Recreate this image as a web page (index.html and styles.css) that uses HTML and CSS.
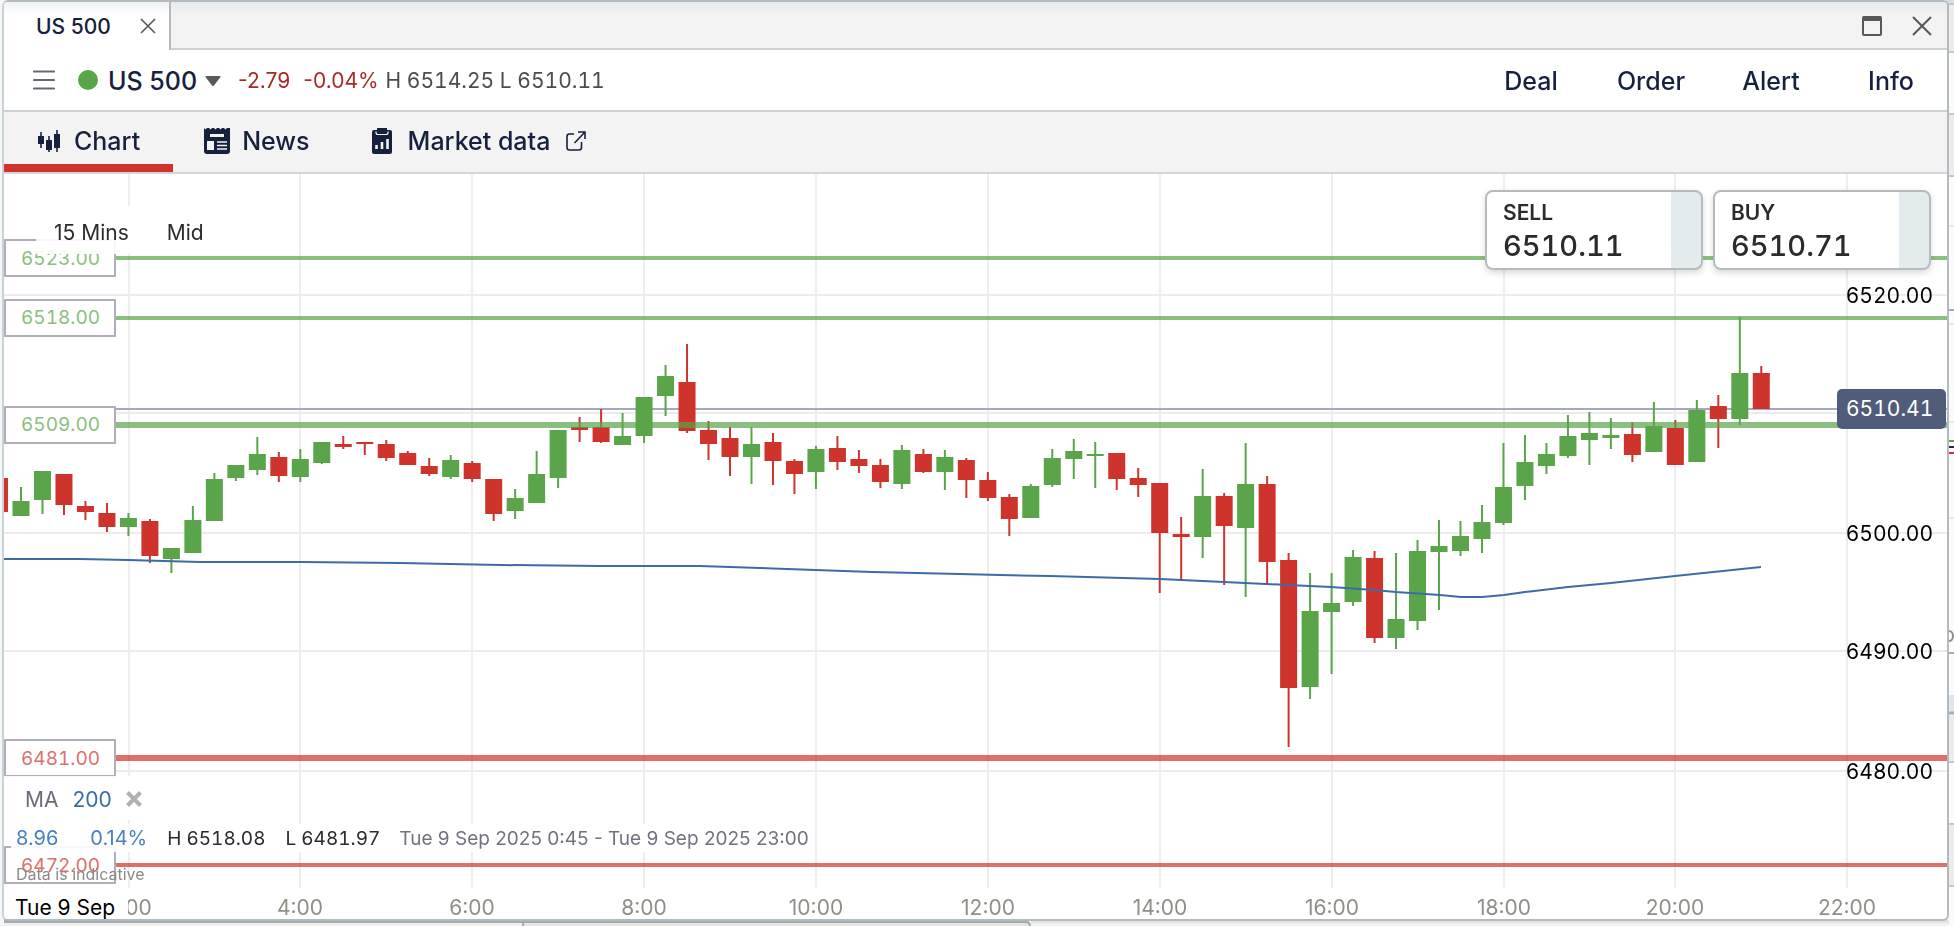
FILE: index.html
```html
<!DOCTYPE html>
<html lang="en">
<head>
<meta charset="utf-8">
<title>US 500</title>
<link rel="stylesheet" href="styles.css">
</head>
<body>
<div class="backdrop" aria-hidden="true">
  <svg class="backdrop-right" viewBox="0 0 8 926" preserveAspectRatio="none">
    <rect width="8" height="926" fill="#fbfbfb"/>
    <rect width="8" height="4" fill="#d8dfe3"/>
    <rect y="5" width="8" height="46" fill="#ececec"/>
    <rect y="114" width="8" height="61" fill="#ececec"/>
    <rect y="715" width="8" height="46" fill="#ececec"/>
    <rect y="824" width="8" height="61" fill="#ececec"/>
    <rect y="695" width="8" height="17" fill="#dde6f1"/>
    <path d="M0 4h8M0 52h8M0 114h8M0 176h8M0 762h8M0 824h8M0 886h8" stroke="#c3c9cc" stroke-width="2"/>
    <path d="M0 226h8M0 324h8M0 422h8M0 518h8" stroke="#e6e6e6" stroke-width="2"/>
    <path d="M0 310h8M0 653h8" stroke="#a3aabb" stroke-width="2"/>
    <path d="M0 441h8" stroke="#5aa44a" stroke-width="2"/>
    <path d="M0 447h8" stroke="#2c2540" stroke-width="2"/>
    <path d="M0 453h8" stroke="#ce342b" stroke-width="2"/>
    <path d="M0 713h8" stroke="#aab0b2" stroke-width="3"/>
    <ellipse cx="3" cy="636" rx="4" ry="5" fill="none" stroke="#8f8f88" stroke-width="2"/>
  </svg>
  <div class="backdrop-bottom"><span class="edge"></span><span class="panel"></span><span class="rest"></span></div>
</div>

<main class="window">
  <header class="titlebar">
    <div class="window-tab">
      <span>US 500</span>
      <button class="icon-button" aria-label="Close tab">
        <svg width="16" height="16" viewBox="0 0 16 16"><path d="M1 1l14 14M15 1L1 15" stroke="#55585a" stroke-width="1.6"/></svg>
      </button>
    </div>
    <div class="window-controls">
      <button class="icon-button" aria-label="Maximise">
        <svg width="20" height="20" viewBox="0 0 20 20"><rect x="1" y="1" width="18" height="18" rx="1" fill="none" stroke="#55585a" stroke-width="2"/><path d="M1 2.500h18" stroke="#55585a" stroke-width="5"/></svg>
      </button>
      <button class="icon-button" aria-label="Close window">
        <svg width="20" height="20" viewBox="0 0 20 20"><path d="M1 1l18 18M19 1L1 19" stroke="#55585a" stroke-width="2"/></svg>
      </button>
    </div>
  </header>

  <section class="market">
    <button class="icon-button" aria-label="Menu">
      <svg width="22" height="20" viewBox="0 0 22 20"><path d="M1 1.500h20M1 10h20M1 18.500h20" stroke="#6b6675" stroke-width="2.200" stroke-linecap="round"/></svg>
    </button>
    <span class="status-dot"></span>
    <button class="market-name">US 500
      <svg width="16" height="10" viewBox="0 0 16 10"><path d="M1 0h14q1 0 .5 1L9 9.500q-1 .8-2 0L.5 1Q0 0 1 0z" fill="#555c5e"/></svg>
    </button>
    <span class="change">-2.79</span>
    <span class="change percent">-0.04%</span>
    <span class="range">H 6514.25 L 6510.11</span>
    <nav class="actions">
      <button>Deal</button><button>Order</button><button>Alert</button><button>Info</button>
    </nav>
  </section>

  <nav class="views">
    <a class="view active" href="#chart">
      <svg width="22" height="22" viewBox="0 0 22 22" fill="#16213e"><path d="M2.200 2h1.600v4H6v8H3.800v4H2.200v-4H0V6h2.200zM10.200 6h1.600v4H14v10h-2.200v2h-1.600v-2H8V10h2.200zM18.200 0h1.600v4H22v14h-2.200v4h-1.600v-4H16V4h2.200z"/></svg>
      Chart
    </a>
    <a class="view" href="#news">
      <svg width="26" height="26" viewBox="0 0 26 26"><path d="M0 0l1.500 1.500L3 0h2l1.500 1.500L8 0h2l1.500 1.500L13 0h2l1.500 1.500L18 0h2l1.500 1.500L23 0h3v23q0 3-3 3H3q-3 0-3-3z" fill="#16213e"/><path d="M6 7.500h14" stroke="#f3f3f3" stroke-width="3"/><rect x="3" y="13" width="7" height="9" fill="#f3f3f3"/><path d="M13 14h10M13 17.500h10M13 21h10" stroke="#f3f3f3" stroke-width="1.500"/></svg>
      News
    </a>
    <a class="view data" href="#market-data">
      <svg width="20" height="26" viewBox="0 0 20 26"><path d="M5 0h10v2h3q2 0 2 2v20q0 2-2 2H2q-2 0-2-2V4q0-2 2-2h3z" fill="#16213e"/><path d="M4 3.500v1q0 2 2 2h8q2 0 2-2v-1" fill="none" stroke="#f3f3f3" stroke-width="1.200"/><path d="M4.500 17v4M10 14v7M15.500 11v10" stroke="#f3f3f3" stroke-width="2.600"/></svg>
      Market data
      <svg width="20" height="20" viewBox="0 0 20 20" fill="none" stroke="#16213e" stroke-width="1.600"><path d="M8 3H3.500Q1 3 1 5.500v11Q1 19 3.500 19H13q2.500 0 2.500-2.500V11M12 1h7v7M19 1L8.500 12"/></svg>
    </a>
  </nav>

  <section class="chart" id="chart">
    <div class="plot">
      <svg class="canvas" id="canvas" viewBox="4 174 1943 714" preserveAspectRatio="none"></svg>
      <div id="labels"></div>
      <div class="settings"><button>15 Mins</button><button>Mid</button></div>
      <div class="tickets">
        <button class="ticket"><span class="side">SELL</span><span class="price">6510.11</span></button>
        <button class="ticket"><span class="side">BUY</span><span class="price">6510.71</span></button>
      </div>
      <div class="legend">
        <div class="indicator"><span>MA</span><span class="period">200</span>
          <button class="icon-button" aria-label="Remove moving average"><svg width="16" height="16" viewBox="0 0 16 16"><path d="M1.500 1.500l13 13M14.500 1.500l-13 13" stroke="#b0b0b5" stroke-width="4"/></svg></button>
        </div>
        <div class="stats">
          <span class="gain">8.96</span><span class="gain gain-percent">0.14%</span><span class="high">H 6518.08</span><span class="low">L 6481.97</span><span class="period-range">Tue 9 Sep 2025 0:45 - Tue 9 Sep 2025 23:00</span>
        </div>
        <small class="note">Data is indicative</small>
      </div>
    </div>
    <div class="axis" id="axis"><span class="date">Tue 9 Sep</span></div>
  </section>
</main>
<script src="chart.js"></script>
</body>
</html>
```
FILE: styles.css
```css
* { box-sizing: border-box; }

body {
  margin: 0;
  height: 100vh;
  padding: 0 5px 5px 2px;
  background: #f4f6f7;
  font-family: Inter, "Liberation Sans", sans-serif;
  color: #2b2b2b;
}

button {
  padding: 0;
  border: 0;
  background: none;
  font: inherit;
  color: inherit;
}

svg { display: block; flex: none; }

.backdrop {
  position: fixed;
  inset: 0;
  z-index: -1;
}

.backdrop-right {
  position: absolute;
  right: 0;
  width: 8px;
  height: 100%;
}

.backdrop-bottom {
  position: absolute;
  inset: auto 5px 0 4px;
  height: 6px;
  display: flex;
}

.backdrop-bottom span { border-top: 3px solid #a3acae; }
.backdrop-bottom .edge { flex: 0 0 518px; background: #f0f0f0; }
.backdrop-bottom .panel {
  flex: 0 0 509px;
  background: #e6e6e6;
  border: 2px solid #a3acae;
  border-top-width: 3px;
  border-bottom: 0;
  border-top-right-radius: 6px;
}
.backdrop-bottom .rest { flex: 1; background: #f2f2f2; border-top-color: #e4e4e4; }

.window {
  height: 100%;
  display: flex;
  flex-direction: column;
  background: #fff;
  border: 2px solid #b3bbbe;
  border-left-color: #cbd2d5;
  border-radius: 6px;
  overflow: hidden;
}

.icon-button { display: grid; place-items: center; }

.titlebar {
  display: flex;
  justify-content: space-between;
  height: 48px;
  background: linear-gradient(#e8ebed, #f3f3f3 14px);
}

.window-tab {
  display: flex;
  align-items: center;
  gap: 29px;
  padding: 0 13px 0 32px;
  border-right: 2px solid #b3bbbe;
  background: linear-gradient(#f1f3f5, #fff 14px);
  font-size: 21px;
  font-weight: 500;
  color: #16213e;
}

.window-controls {
  flex: 1;
  display: flex;
  align-items: center;
  justify-content: flex-end;
  gap: 30px;
  padding: 2px 15px 0 0;
  border-bottom: 2px solid #cbd2d5;
}

.market {
  display: flex;
  align-items: center;
  height: 62px;
  padding-left: 29px;
  border-bottom: 2px solid #cbd2d5;
  font-size: 21px;
}

.status-dot {
  width: 20px;
  height: 20px;
  margin: 0 10px 0 23px;
  border-radius: 50%;
  background: #5aa44a;
}

.market-name {
  display: flex;
  align-items: center;
  gap: 8px;
  padding-top: 2px;
  font-size: 25px;
  font-weight: 500;
  color: #16213e;
}

.change { margin-left: 17px; color: #a82a26; }
.percent { margin-left: 13px; }
.range { margin-left: 7px; color: #4b4b50; font-variant-numeric: tabular-nums; }

.actions {
  display: flex;
  margin: 0 -4px 0 auto;
  font-size: 25px;
  font-weight: 500;
  color: #16213e;
}

.actions button { width: 120px; padding-top: 2px; }

.views {
  display: flex;
  height: 62px;
  background: #f3f3f3;
  border-bottom: 2px solid #d5d5dd;
}

.view {
  display: flex;
  align-items: center;
  gap: 12px;
  padding: 6px 31px 0;
  border-bottom: 8px solid transparent;
  font-size: 25px;
  font-weight: 500;
  color: #16213e;
  text-decoration: none;
}

.view.active { gap: 14px; padding: 6px 33px 0 34px; border-bottom-color: #ce342b; }
.view.data { gap: 16px; }

.chart {
  flex: 1;
  min-height: 0;
  display: flex;
  flex-direction: column;
}

.plot { position: relative; flex: 1; }

.canvas {
  position: absolute;
  inset: 0;
  width: 100%;
  height: 100%;
}

.level, .tick, .current {
  position: absolute;
  transform: translateY(-50%);
  font-size: 21px;
  font-variant-numeric: tabular-nums;
}

.level {
  left: 0;
  display: grid;
  place-items: center start;
  width: 112px;
  height: 38px;
  padding-left: 15px;
  border: 2px solid #b0aeb8;
  background: #fff;
  font-size: 19px;
}

.level.up { color: #8bbf80; }
.level.down { color: #dd716b; }
.tick { right: 14px; color: #000; }

.current {
  right: 1px;
  width: 109px;
  padding-left: 9px;
  line-height: 40px;
  border-radius: 5px;
  background: #4f5d7a;
  color: #fff;
}

.settings {
  position: absolute;
  left: 32px;
  top: 32px;
  display: flex;
  gap: 38px;
  padding: 15px 18px 9px;
  background: rgba(255, 255, 255, 0.9);
  font-size: 21px;
  line-height: 24px;
}

.tickets {
  position: absolute;
  right: 16px;
  top: 16px;
  display: flex;
  gap: 10px;
}

.ticket {
  display: flex;
  flex-direction: column;
  width: 218px;
  height: 80px;
  padding: 8px 16px;
  border: 2px solid #b3bbbe;
  border-radius: 8px;
  background: linear-gradient(to left, #e3ebed 30px, #fff 30px);
  box-shadow: 0 3px 6px rgba(0, 0, 0, 0.15);
  text-align: left;
}

.side { font-size: 21px; font-weight: 600; line-height: 26px; }
.price { font-size: 29px; font-weight: 500; line-height: 40px; font-variant-numeric: tabular-nums; }

.legend {
  position: absolute;
  left: 0;
  bottom: 0;
  display: flex;
  flex-direction: column;
  align-items: flex-start;
  font-size: 20px;
}

.indicator, .stats { display: flex; align-items: center; background: rgba(255, 255, 255, 0.9); }
.indicator { gap: 14px; height: 44px; padding: 2px 12px 0 21px; font-size: 21px; color: #6b6b78; }
.period { color: #3d6ba8; }
.stats { height: 28px; margin: 4px 0 0 7px; padding: 0 5px; }
.gain { color: #4a80c4; }
.gain-percent { margin-left: 32px; }
.high, .low { margin-left: 20px; font-size: 19px; font-variant-numeric: tabular-nums; }
.period-range { margin-left: 19px; font-size: 19px; color: #73717f; }
.note { height: 36px; padding: 12px 0 0 12px; font-size: 16px; color: #8a8a8a; }

.axis {
  position: relative;
  height: 31px;
  font-size: 21px;
  line-height: 40px;
  color: #8f8f88;
}

.hour { position: absolute; transform: translateX(-50%); }

.date {
  position: absolute;
  z-index: 1;
  width: 124px;
  padding-left: 11px;
  background: #fff;
  color: #000;
}
```
FILE: chart.js
```js
const VIEW = { x: 4, y: 174, w: 1943, h: 714 };
const GREEN = '#5aa44a';
const RED = '#ce342b';

// Each candle: direction, wick top, body top, body bottom, wick bottom.
const candles = `
R478,478,512,512 G487,501,516,516 G471,471,500,514 R474,474,505,515 R501,506,512,520 R503,513,527,532
G513,518,527,536 R519,521,556,563 G548,548,559,573 G506,520,553,553 G473,479,521,521 G465,465,478,481
G437,454,470,475 R452,457,476,482 G449,459,477,482 G442,442,463,464 R436,444,447,449 R442,442,444,455
R440,444,458,461 R451,453,465,465 R458,466,474,476 G455,460,477,479 R461,463,479,482 R479,479,514,521
G489,498,511,519 G451,474,503,503 G430,430,478,488 R417,427,430,442 R409,427,442,443 G413,436,445,445
G397,397,436,443 G365,376,396,416 R344,382,431,433 R421,430,444,460 R427,438,457,476 G427,444,457,484
R433,442,461,485 R459,461,474,494 G446,449,472,489 R436,448,462,470 R450,459,466,473 R459,465,482,488
G445,450,484,489 R449,454,472,473 G450,457,472,490 R458,460,480,498 R472,480,498,501 R494,497,519,536
G484,486,518,518 G449,458,485,487 G439,451,459,479 G442,454,456,488 R453,453,479,490 R468,478,485,497
R483,483,533,593 R517,534,537,579 G469,496,537,558 R493,496,526,585 G443,484,528,597 R476,484,562,585
R553,560,688,747 G573,611,687,699 G573,603,612,674 G550,557,602,606 R551,558,638,643 G553,619,638,649
G540,551,621,630 G520,546,552,610 G521,536,551,556 G505,522,539,553 G443,487,523,525 G435,462,486,500
G443,454,466,474 G415,436,456,458 G412,433,440,465 G418,435,438,449 R422,434,455,462 G402,426,452,452
R420,428,465,465 G400,410,462,462 R395,406,419,448 G317,373,419,425 R366,373,409,409`.trim().split(/\s+/);

const average = [[4, 559], [80, 559], [128, 560], [200, 562], [300, 562], [400, 563], [500, 565], [600, 566], [700, 566],
  [760, 568], [872, 572], [960, 574], [1000, 575], [1050, 576], [1160, 579], [1224, 582], [1288, 585], [1331, 587],
  [1374, 590], [1396, 592], [1440, 595], [1461, 597], [1482, 597], [1504, 595], [1525, 592], [1568, 587], [1611, 583],
  [1675, 576], [1761, 567]];

const levels = [
  { price: 6523, side: 'up', weight: 4 }, { price: 6518, side: 'up', weight: 4 }, { price: 6509, side: 'up', weight: 6 },
  { price: 6481, side: 'down', weight: 6 }, { price: 6472, side: 'down', weight: 4 }
];

// Grid rows are snapped to whole pixels.
const rows = { 6520: 295, 6510: 413, 6500: 533, 6490: 651, 6480: 771 };

const priceY = price => Math.round(294 + (6520 - price) * 11.9);
const hourX = hour => Math.round(128.5 + (hour - 2) * 85.94);
const candleX = index => 21 + index * 21.485;
const topOf = y => ((y - VIEW.y) / VIEW.h * 100).toFixed(3) + '%';

let shapes = '';
for (let hour = 2; hour <= 22; hour += 2) {
  shapes += `<path d="M${hourX(hour)} 174V888" stroke="#eeeeee" stroke-width="2"/>`;
}
for (const y of Object.values(rows)) {
  shapes += `<path d="M4 ${y}H1947" stroke="#ececee" stroke-width="2"/>`;
}
shapes += '<path d="M4 409H1947" stroke="#a3aabb" stroke-width="2"/>';

candles.forEach((entry, i) => {
  const [high, top, bottom, low] = entry.slice(1).split(',').map(Number);
  const x = candleX(i - 1);
  const color = entry[0] === 'G' ? GREEN : RED;
  shapes += `<path d="M${x} ${high}V${low}" stroke="${color}" stroke-width="2"/>`;
  shapes += `<rect x="${x - 8.5}" y="${top}" width="17" height="${bottom - top}" fill="${color}"/>`;
});

for (const level of levels) {
  const color = level.side === 'up' ? GREEN : RED;
  shapes += `<path d="M4 ${priceY(level.price)}H1947" stroke="${color}" stroke-width="${level.weight}" opacity="0.7"/>`;
}
shapes += `<polyline points="${average.join(' ')}" fill="none" stroke="#3d6ba8" stroke-width="2"/>`;
document.getElementById('canvas').innerHTML = shapes;

let labels = levels.map(l => `<span class="level ${l.side}" style="top:${topOf(priceY(l.price))}">${l.price}.00</span>`).join('');
for (const price of [6520, 6500, 6490, 6480]) {
  labels += `<span class="tick" style="top:${topOf(rows[price])}">${price}.00</span>`;
}
labels += `<span class="current" style="top:${topOf(409)}">6510.41</span>`;
document.getElementById('labels').innerHTML = labels;

const axis = document.getElementById('axis');
for (let hour = 2; hour <= 22; hour += 2) {
  const left = ((hourX(hour) - VIEW.x) / VIEW.w * 100).toFixed(3);
  axis.insertAdjacentHTML('beforeend', `<span class="hour" style="left:${left}%">${hour}:00</span>`);
}
```
